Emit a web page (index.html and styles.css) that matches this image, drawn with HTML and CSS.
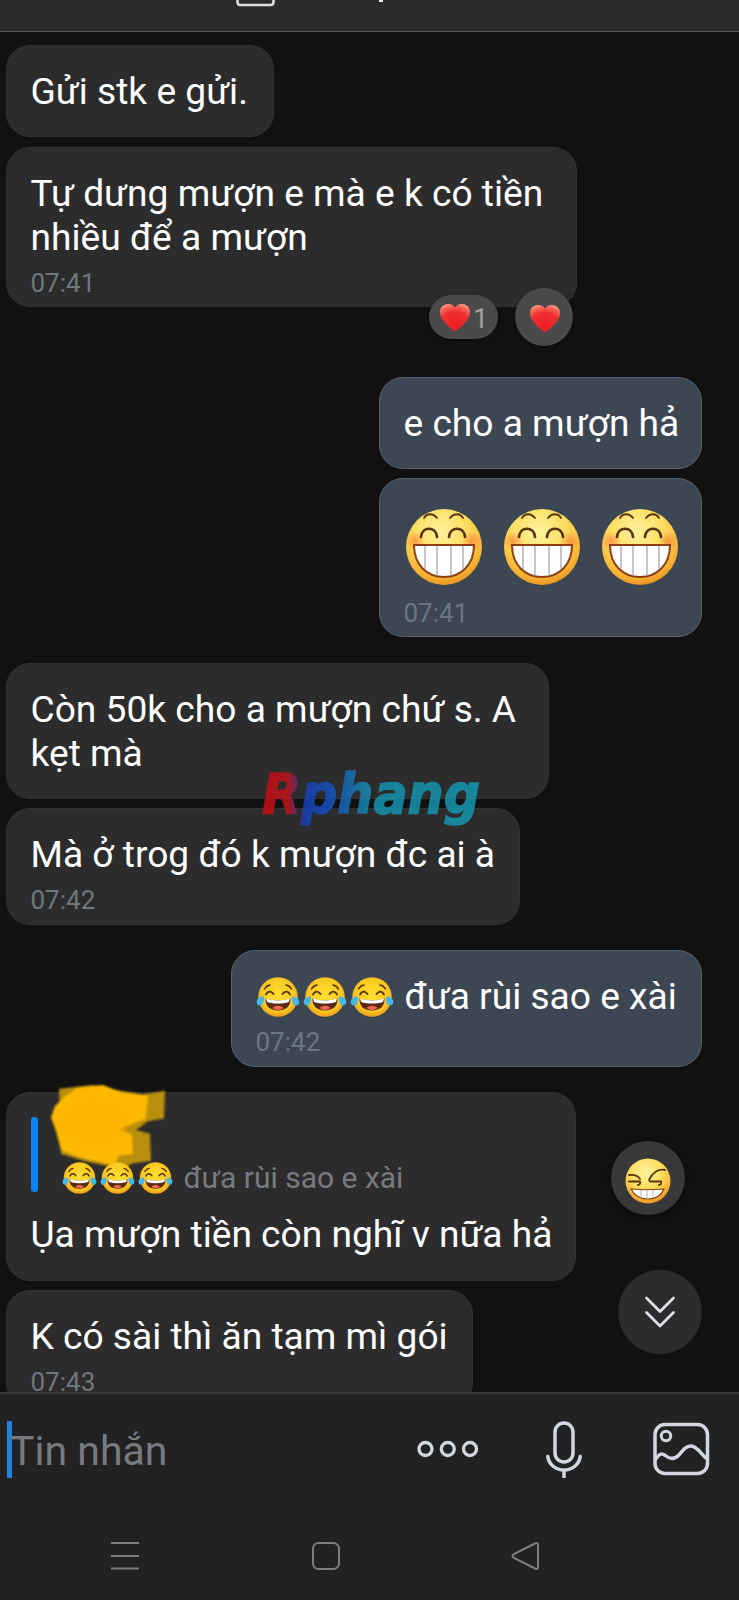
FILE: index.html
```html
<!DOCTYPE html>
<html lang="vi">
<head>
<meta charset="utf-8">
<title>Tin nhắn</title>
<link rel="stylesheet" href="styles.css">
</head>
<body>
<svg class="defs" aria-hidden="true">
  <defs>
    <radialGradient id="face" cx=".45" cy=".3" r=".75">
      <stop offset="0" stop-color="#fff3a0"/><stop offset=".5" stop-color="#fddc5c"/><stop offset=".8" stop-color="#f9b233"/><stop offset="1" stop-color="#e08a1c"/>
    </radialGradient>
    <radialGradient id="joyface" cx=".5" cy=".45" r=".55">
      <stop offset="0" stop-color="#fde030"/><stop offset=".75" stop-color="#fbc923"/><stop offset="1" stop-color="#ef9d1c"/>
    </radialGradient>
    <radialGradient id="blush"><stop offset="0" stop-color="#f4743a" stop-opacity=".65"/><stop offset="1" stop-color="#f4743a" stop-opacity="0"/></radialGradient>
    <radialGradient id="heartfill" cx=".5" cy=".75" r=".8">
      <stop offset="0" stop-color="#ee1c24"/><stop offset=".6" stop-color="#f0302f"/><stop offset=".85" stop-color="#f7695a"/><stop offset="1" stop-color="#ffa08a"/>
    </radialGradient>
    <linearGradient id="brand" gradientUnits="userSpaceOnUse" x1="0" y1="0" x2="222" y2="0">
      <stop offset="0" stop-color="#c50d12"/><stop offset=".12" stop-color="#bd141e"/><stop offset=".19" stop-color="#1741b4"/><stop offset=".3" stop-color="#1650bd"/><stop offset=".5" stop-color="#1690ae"/><stop offset="1" stop-color="#1597b0"/>
    </linearGradient>
  </defs>
  <symbol id="grin" viewBox="0 0 78 78">
    <circle cx="39" cy="39" r="38" fill="url(#face)"/>
    <circle cx="10" cy="33" r="10" fill="url(#blush)"/><circle cx="67" cy="33" r="10" fill="url(#blush)"/>
    <g fill="none" stroke="#5a3210" stroke-linecap="round">
      <path stroke-width="1.8" d="M19 10c3-5 9-5 13 0M45 10c4-5 10-5 13 0"/>
      <path stroke-width="2.7" d="M16 29c1-11 15-11 16 0M44 29c1-11 15-11 16 0"/>
    </g>
    <path d="M9 37h60c0 20-13 32-30 32S9 57 9 37z" fill="#fff" stroke="#8c3f12" stroke-width="2"/>
    <path d="M20 38v23M32 38v30M46 38v30M58 38v23" stroke="#999" stroke-width="1.1"/>
  </symbol>
  <symbol id="joy" viewBox="0 0 44 42">
    <circle cx="22" cy="21" r="19.8" fill="url(#joyface)"/>
    <path d="M9.500 22.500c8 2.500 17 2.500 25 0 .5 7-4 12-12.500 12S9 29.500 9.500 22.500z" fill="#5b2a12"/>
    <path d="M10 22.500c8 2.500 16 2.500 24 0l-1 3.500c-7 2-15 2-22 0z" fill="#fff"/>
    <path d="M16.500 32c3-3 8-3 11 0-3 2.500-8 2.500-11 0z" fill="#ee6550"/>
    <g fill="none" stroke="#59300f" stroke-width="1.900" stroke-linecap="round" stroke-linejoin="round">
      <path d="M10 18.500c1.500-3.500 5-4 7.500-.5M26.500 18c2.500-3.500 6-3 7.500.5"/><path stroke-width="1.500" d="M8.500 13q2-3.500 5.500-4M30 9q3.500 .5 5.500 4"/>
    </g>
    <path d="M7.500 20c1.500 5-.5 10-4 9.500S0 24 2.500 22zM36.500 20c-1.500 5 .5 10 4 9.500s3.500-5.500 1-7.500z" fill="#48b7e6"/>
  </symbol>
  <symbol id="heart" viewBox="0 0 32 29">
    <path d="M16 28.500C10 24 1 17 1 9 1 .5 12-1.500 16 4.500 20-1.500 31 .5 31 9c0 8-9 15-15 19.500z" fill="url(#heartfill)"/>
  </symbol>
</svg>

<div class="screen">
  <header class="topbar">
    <svg width="739" height="30" viewBox="0 0 739 30" fill="none">
      <path d="M237.500-5v7q0 3 3 3h30q3 0 3-3v-7" stroke="#d9dde4" stroke-width="2.600"/>
      <path d="M381 0v2" stroke="#e8e8e8" stroke-width="4"/>
    </svg>
  </header>

  <main class="chat">
    <div class="bubble in"><p class="text">Gửi stk e gửi.</p></div>
    <div class="bubble in wide-a">
      <p class="text">Tự dưng mượn e mà e k có tiền<br>nhiều để a mượn</p>
      <time>07:41</time>
      <div class="reactions">
        <span class="pill"><svg class="heart"><use href="#heart"/></svg><span>1</span></span>
        <span class="react"><svg class="heart"><use href="#heart"/></svg></span>
      </div>
    </div>

    <div class="bubble out after-reactions"><p class="text">e cho a mượn hả</p></div>
    <div class="bubble out">
      <div class="grins"><svg><use href="#grin"/></svg><svg><use href="#grin"/></svg><svg><use href="#grin"/></svg></div>
      <time>07:41</time>
    </div>

    <div class="bubble in group wide-b"><p class="text">Còn 50k cho a mượn chứ s. A<br>kẹt mà</p></div>
    <div class="bubble in wide-c">
      <p class="text">Mà ở trog đó k mượn đc ai à</p><time>07:42</time>
      <svg class="watermark" width="248" height="92" viewBox="-10 -10 248 92">
        <text x="0" y="50" textLength="218" lengthAdjust="spacingAndGlyphs" fill="url(#brand)" stroke="url(#brand)">Rphang</text>
      </svg>
    </div>

    <div class="bubble out group wide-d">
      <p class="text joys"><svg><use href="#joy"/></svg><svg><use href="#joy"/></svg><svg><use href="#joy"/></svg><span>đưa rùi sao e xài</span></p>
      <time>07:42</time>
    </div>

    <div class="bubble in group last-group wide-e">
      <svg class="scribble" width="130" height="92" viewBox="0 0 130 96" preserveAspectRatio="none">
        <path fill="#b98f0e" d="M16 6l34-4 22 5 28 5 22-4-1 29-16 3-12 9 14 4 1 28-19 3-8 6-38-8-25-8z"/>
        <path fill="#fdb900" d="M22 14l12-9 26-3 19 8 26 3-2 24-12 5-14 6 12 6 1 20-14 2-4 10-34-8-20-8-5-20-5-14 4-12z"/>
        <ellipse cx="52" cy="40" rx="34" ry="25" fill="#ffab00" opacity=".35"/>
      </svg>
      <div class="quote">
        <p><svg><use href="#joy"/></svg><svg><use href="#joy"/></svg><svg><use href="#joy"/></svg><span>đưa rùi sao e xài</span></p>
      </div>
      <p class="text">Ụa mượn tiền còn nghĩ v nữa hả</p>
    </div>
    <div class="bubble in wide-f"><p class="text">K có sài thì ăn tạm mì gói</p><time>07:43</time></div>

    <button class="float sly" aria-label="Biểu cảm">
      <svg width="46" height="46" viewBox="0 0 46 46" fill="none">
        <circle cx="23" cy="23" r="22.500" fill="url(#face)"/>
        <path d="M4 17q8-1 11 4M24 22q6-12 16-10M4 23.500h11q1 3-2 3.500M25 23.500h11q1 3-2 3.500" stroke="#5b3210" stroke-width="1.800" stroke-linecap="round"/>
        <path d="M6 31q17 1.500 33 0-4 10-16 10T6 31z" fill="#fff" stroke="#884015" stroke-width="1.200"/>
        <path d="M16 32v8M22 32v9M28 32v8" stroke="#aaa" stroke-width=".9"/>
      </svg>
    </button>
    <button class="float down" aria-label="Cuộn xuống">
      <svg width="32" height="34" viewBox="0 0 32 34" fill="none" stroke="#dde0e8" stroke-width="2.800" stroke-linecap="round" stroke-linejoin="round"><path d="M2.500 3L16 16.500 29.500 3M2.500 17.500L16 31l13.500-13.500"/></svg>
    </button>
  </main>

  <footer class="composer">
    <div class="field"><i class="caret"></i><span>Tin nhắn</span></div>
    <svg class="more" width="62" height="18" viewBox="0 0 62 18" fill="none" stroke="#d3d7df" stroke-width="3.300"><circle cx="8.500" cy="9" r="6.500"/><circle cx="30.800" cy="9" r="6.500"/><circle cx="53" cy="9" r="6.500"/></svg>
    <svg class="mic" width="38" height="58" viewBox="0 0 38 58" fill="none" stroke="#d3d7df" stroke-width="3.500"><rect x="10" y="3" width="18" height="39" rx="9"/><path stroke-linecap="round" d="M2.800 36.500c1 8 8 13.500 16.200 13.500s15.200-5.500 16.200-13.500"/><path d="M19 49v9"/></svg>
    <svg class="photo" width="58" height="54" viewBox="0 0 58 54" fill="none" stroke="#d3d7df" stroke-width="3.500"><rect x="3" y="2.500" width="52.500" height="49" rx="10"/><circle cx="14" cy="14" r="4.700" stroke-width="3"/><path d="M3 38c4-6 7-8 11-4 5 4 9 3 13-1 4-5 7-9 12-9 6 0 10 8 16 13"/></svg>
  </footer>
  <nav class="sysnav">
    <svg width="30" height="30" viewBox="0 0 30 30" stroke="#7d7d7d" stroke-width="2"><path d="M1 2h28M1 15h28M1 27.500h28"/></svg>
    <svg width="30" height="30" viewBox="0 0 30 30" fill="none" stroke="#7d7d7d" stroke-width="2"><rect x="2" y="2" width="26" height="26" rx="5.500"/></svg>
    <svg width="30" height="30" viewBox="0 0 30 30" fill="none" stroke="#7d7d7d" stroke-width="2"><path d="M3 13L24 2.500q3-1.500 3 1.500v22q0 3-3 1.500L3 17q-3-2 0-4z"/></svg>
  </nav>
</div>
</body>
</html>
```
FILE: styles.css
```css
* { box-sizing: border-box; }
body { margin: 0; background: #111; font-family: Roboto, "Liberation Sans", sans-serif; }
p { margin: 0; }
svg { display: block; flex: none; }
.defs { position: absolute; width: 0; height: 0; }

.screen { width: 739px; height: 1600px; display: flex; flex-direction: column; overflow: hidden; }
.topbar { height: 32px; flex: none; background: #2c2c2c; border-bottom: 1px solid #535353; }

.chat {
  position: relative;
  height: 1360px;
  flex: none;
  overflow: hidden;
  padding: 13px 37px 0 6px;
  display: flex;
  flex-direction: column;
  align-items: flex-start;
  gap: 9.5px;
  background: #111;
}
.bubble {
  position: relative;
  flex: none;
  padding: 24px 24px 22px 23.5px;
  border: 1px solid #323232;
  border-radius: 24px;
  background: #2c2c2c;
}
.bubble:has(time) { padding-bottom: 7.5px; }
.in { align-self: flex-start; }
.out { align-self: flex-end; width: 323px; background: #3c4753; border-color: #55616d; }
.group { margin-top: 16px; }
.last-group { margin-top: 15.5px; }
.after-reactions { margin-top: 60px; }
.in:first-child { width: 268px; }
.wide-a { width: 571px; }
.wide-b { width: 543px; }
.wide-c { width: 514px; }
.wide-d { width: 471px; }
.wide-e { width: 570px; height: 189px; }
.wide-f { width: 467px; }

.text { font-size: 37.15px; line-height: 44px; color: #fff; white-space: nowrap; }
time { display: block; margin-top: 8px; font-size: 26px; line-height: 31px; color: #70777c; }
.out time { color: #6b7681; }

.reactions { position: absolute; right: 3px; bottom: -40px; display: flex; align-items: center; gap: 17px; }
.pill, .react { display: flex; align-items: center; justify-content: center; background: #4a4a4a; box-shadow: 0 1px 3px #0006; }
.pill { width: 69px; height: 44px; gap: 2px; border-radius: 22px; font-size: 27px; color: #a0a0a0; }
.pill span { padding-top: 3px; }
.react { width: 58px; height: 58px; border-radius: 50%; padding: 3px 0 0 2px; }
.heart { width: 32px; height: 29px; }

.grins { display: flex; gap: 20px; margin: 4.5px 0 4px 1px; }
.grins svg { width: 78px; height: 78px; }
.grins + time { margin-top: 12px; }

.joys { display: flex; align-items: center; gap: 3px; }
.joys svg { width: 44px; height: 42px; }
.joys span { margin-left: 8px; }

.quote {
  position: relative;
  height: 75px;
  margin-bottom: 21.5px;
  display: flex;
  align-items: flex-end;
  padding-left: 31px;
}
.quote::before { content: ""; position: absolute; left: 0; top: 0; width: 7px; height: 75px; border-radius: 3px; background: #0b84f3; }
.quote p { display: flex; align-items: center; gap: 3px; height: 28px; font-size: 30px; line-height: 30px; color: #777b80; white-space: nowrap; }
.quote svg { width: 35px; height: 34px; }
.quote span { margin-left: 8px; }
.scribble { position: absolute; left: 36px; top: -10px; filter: blur(1.2px); }

.watermark { position: absolute; left: 245px; top: -56px; opacity: .85; }
.watermark text { font: italic bold 55px "DejaVu Sans", sans-serif; stroke-width: 1.5px; }

.float { position: absolute; display: flex; align-items: center; justify-content: center; padding: 0; border: 0; border-radius: 50%; }
.sly { right: 54px; top: 1109px; width: 74px; height: 74px; padding-top: 6px; background: #383838; box-shadow: 0 2px 4px #0007; }
.down { right: 37px; top: 1238px; width: 84px; height: 84px; background: #2c2c2c; }

.composer { height: 112px; flex: none; border-top: 2px solid #393939; background: #222; display: flex; align-items: center; padding-left: 7px; }
.field { flex: 1; display: flex; align-items: center; font-size: 41px; color: #777b80; }
.field span { margin-left: -2px; padding-top: 3px; }
.caret { width: 5px; height: 57px; background: #1b82e2; }
.more { margin-right: 66px; }
.mic { margin-right: 69px; }
.photo { margin-right: 29px; }
.sysnav { flex: 1; background: #222; display: flex; align-items: flex-start; padding: 37px 198px 0 110px; justify-content: space-between; }
```
